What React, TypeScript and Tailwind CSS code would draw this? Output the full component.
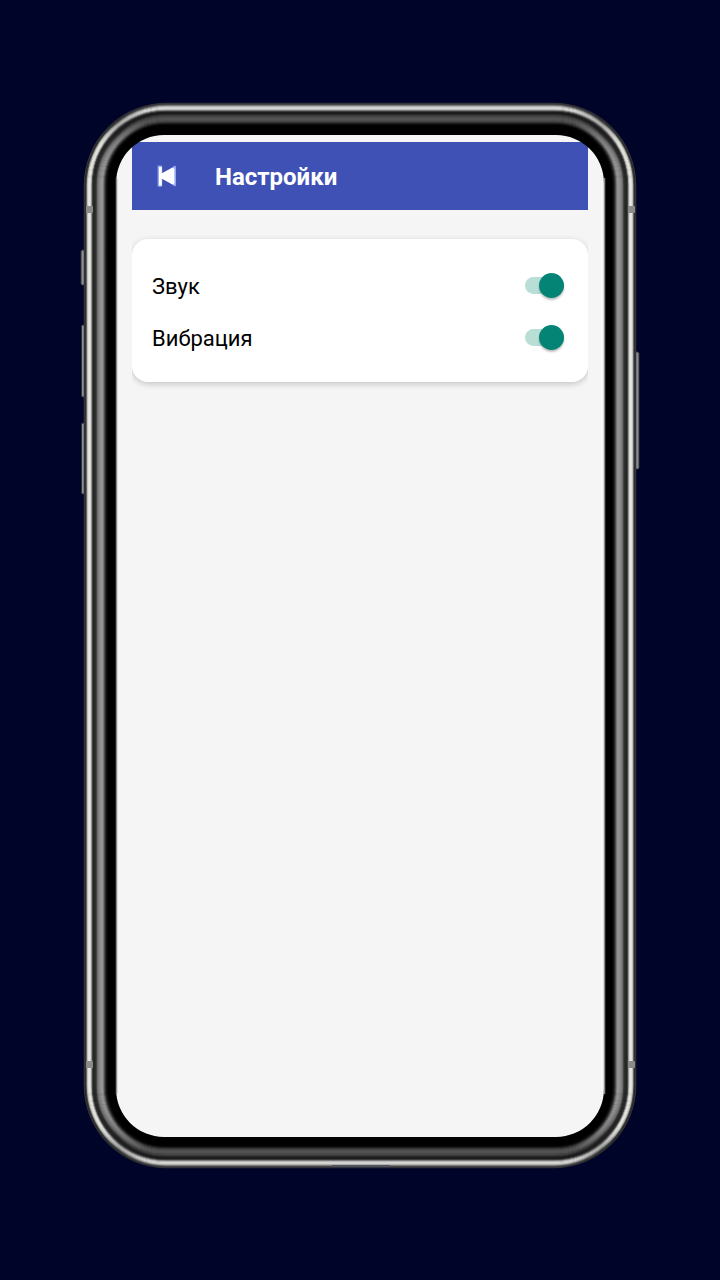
import { useState } from "react";

// One entry per unit of depth, from the outer edge inwards: side, corner, top and bottom.
const metal: [string, string, string][] = [
  ["#33353f", "#2c2e36", "#2e3038"],
  ["#262826", "#2c2d2f", "#3a3a3c"],
  ["#4a4a4a", "#3c3c3c", "#6c6c6c"],
  ["#b4b4b0", "#6c6c6c", "#a4a4a4"],
  ["#dededa", "#9a9a99", "#cfcfcd"],
  ["#e8e8e4", "#b2b2b0", "#d8d8d6"],
  ["#e2e2de", "#a4a4a2", "#c6c6c4"],
  ["#aeaeaa", "#6c6c6c", "#8c8c8c"],
  ["#484848", "#3a3a3a", "#444444"],
  ["#262826", "#222222", "#1e1e1e"],
  ["#242624", "#1e1e1e", "#1a1a1a"],
  ["#2a2c2a", "#202020", "#242424"],
  ["#3a3a3a", "#2a2a2a", "#363636"],
  ["#666666", "#444444", "#424242"],
  ["#7a7a7a", "#5c5c5c", "#4a4a4a"],
  ["#868686", "#6c6c6c", "#505050"],
  ["#8e8e8e", "#787878", "#545454"],
  ["#969696", "#808080", "#4e4e4e"],
  ["#989898", "#7c7c7c", "#464646"],
  ["#868686", "#606060", "#383838"],
  ["#5c5c5c", "#3c3c3c", "#222222"],
  ["#363636", "#1c1c1c", "#0e0e0e"],
  ["#181818", "#080808", "#020202"],
];

function PhoneFrame() {
  return (
    <svg
      aria-hidden="true"
      viewBox="80 102 560 1068"
      className="pointer-events-none absolute inset-0 h-full w-full"
    >
      <defs>
        {metal.map(([side, corner, middle], depth) => (
          <linearGradient
            key={depth}
            id={`metal${depth}`}
            gradientUnits="userSpaceOnUse"
            x1="84"
            y1="0"
            x2="636"
            y2="0"
          >
            <stop offset="0.03" stopColor={side} />
            <stop offset="0.062" stopColor={corner} />
            <stop offset="0.112" stopColor={middle} />
            <stop offset="0.888" stopColor={middle} />
            <stop offset="0.938" stopColor={corner} />
            <stop offset="0.97" stopColor={side} />
          </linearGradient>
        ))}
      </defs>
      <g fill="#8b8d8f" stroke="#30323a" strokeWidth="1">
        <rect x="81" y="250" width="6" height="35" rx="1.5" />
        <rect x="81.5" y="325" width="6" height="72" rx="1.5" />
        <rect x="81.5" y="423" width="6" height="71" rx="1.5" />
        <rect x="633" y="352" width="6" height="117" rx="1.5" />
      </g>
      <path
        fill="#000"
        fillRule="evenodd"
        d="M166 103H554A82 82 0 0 1 636 185V1086A82 82 0 0 1 554 1168H166A82 82 0 0 1 84 1086V185A82 82 0 0 1 166 103ZM164 135A48 48 0 0 0 116 183V1089A48 48 0 0 0 164 1137H556A48 48 0 0 0 604 1089V183A48 48 0 0 0 556 135Z"
      />
      {metal.map((_, depth) => (
        <rect
          key={depth}
          x={84.5 + depth}
          y={103.5 + depth}
          width={551 - 2 * depth}
          height={1064 - 2 * depth}
          rx={82 - depth * 1.05}
          fill="none"
          stroke={`url(#metal${depth})`}
          strokeWidth="1.5"
        />
      ))}
      <g fill="none" stroke="#8a8a8a" strokeWidth="1.5">
        <path d="M116.5 178V1094M604.5 178V1094" />
      </g>
      <g fill="#8b8b8b">
        <rect x="86" y="206" width="7" height="7" rx="1" />
        <rect x="628" y="206" width="7" height="7" rx="1" />
        <rect x="86" y="1061" width="7" height="7" rx="1" />
        <rect x="628" y="1061" width="7" height="7" rx="1" />
      </g>
      <rect x="332" y="1165" width="58" height="2" fill="#50515f" />
    </svg>
  );
}

function BackIcon() {
  return (
    <svg aria-hidden="true" viewBox="0 0 22 24" className="h-6 w-[22px]">
      <g fill="#98a8f2" stroke="#98a8f2" strokeWidth="2.4" strokeLinejoin="round">
        <path d="M2.8 2.6H5V21.6H2.8Z" />
        <path d="M18.8 3V21L6.5 12.2Z" />
      </g>
      <path
        fill="#fff"
        d="M3 3H5.8V9.2L16.2 3.8Q18.4 3.2 18.4 5.4V18.8Q18.4 21 16.2 20.2L5.8 14.8V21.4H3Z"
      />
    </svg>
  );
}

function SettingRow({ id, label }: { id: string; label: string }) {
  const [on, setOn] = useState(true);
  return (
    <div className="flex h-[52px] items-center justify-between">
      <label htmlFor={id} className="pt-1 text-[22px] leading-7 text-black">
        {label}
      </label>
      <input
        id={id}
        type="checkbox"
        role="switch"
        checked={on}
        onChange={(event) => setOn(event.target.checked)}
        className="flex h-[17px] w-[39px] cursor-pointer appearance-none items-center justify-start rounded-full bg-[#d0d0d0] before:h-[25px] before:w-[25px] before:shrink-0 before:rounded-full before:bg-white before:shadow-[0_2px_2px_rgba(0,0,0,0.25)] checked:justify-end checked:bg-[#b9ded6] checked:before:bg-[#048475]"
      />
    </div>
  );
}

export default function App() {
  return (
    <div className="flex min-h-screen items-start justify-center bg-[#000428] px-20 py-[102px] font-['Roboto',sans-serif]">
      <div className="relative flex aspect-[560/1068] w-full max-w-[560px] flex-col px-9 pt-8 pb-8">
        <main className="flex-1 overflow-hidden rounded-[44px] bg-[#f5f5f5] px-4 pt-2">
          <header className="flex h-[68px] items-center gap-[37px] bg-[#3f51b5] pl-6">
            <button type="button" aria-label="Назад" className="cursor-pointer">
              <BackIcon />
            </button>
            <h1 className="pt-0.5 text-2xl font-bold text-white">Настройки</h1>
          </header>
          <div className="overflow-hidden pt-[29px] pb-4">
            <section className="rounded-2xl bg-white pt-5 pr-6 pb-[19px] pl-5 shadow-[0_2px_6px_rgba(0,0,0,0.2)]">
              <SettingRow id="sound" label="Звук" />
              <SettingRow id="vibration" label="Вибрация" />
            </section>
          </div>
        </main>
        <PhoneFrame />
      </div>
    </div>
  );
}
